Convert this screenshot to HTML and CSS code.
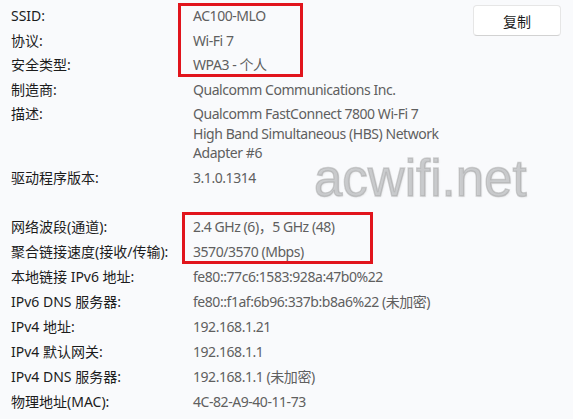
FILE: index.html
```html
<!DOCTYPE html>
<html lang="zh-CN">
<head>
    <meta charset="UTF-8">
    <title>网络属性</title>
    <link rel="stylesheet" href="styles.css">
</head>
<body>

    <div class="panel">
        <div class="details">
            <div class="group">
                <div class="label">SSID:</div>
                <div class="value">AC100-MLO</div>

                <div class="label">协议:</div>
                <div class="value">Wi-Fi 7</div>

                <div class="label">安全类型:</div>
                <div class="value">WPA3 - 个人</div>

                <div class="label">制造商:</div>
                <div class="value">Qualcomm Communications Inc.</div>

                <div class="label">描述:</div>
                <div class="value">Qualcomm FastConnect 7800 Wi-Fi 7<br>High Band Simultaneous (HBS) Network<br>Adapter #6</div>

                <div class="label">驱动程序版本:</div>
                <div class="value">3.1.0.1314</div>
            </div>

            <div class="group group-net">
                <div class="label">网络波段(通道):</div>
                <div class="value">2.4 GHz (6)，5 GHz (48)</div>

                <div class="label">聚合链接速度(接收/传输):</div>
                <div class="value">3570/3570 (Mbps)</div>

                <div class="label">本地链接 IPv6 地址:</div>
                <div class="value">fe80::77c6:1583:928a:47b0%22</div>

                <div class="label">IPv6 DNS 服务器:</div>
                <div class="value">fe80::f1af:6b96:337b:b8a6%22 (未加密)</div>

                <div class="label">IPv4 地址:</div>
                <div class="value">192.168.1.21</div>

                <div class="label">IPv4 默认网关:</div>
                <div class="value">192.168.1.1</div>

                <div class="label">IPv4 DNS 服务器:</div>
                <div class="value">192.168.1.1 (未加密)</div>

                <div class="label">物理地址(MAC):</div>
                <div class="value">4C-82-A9-40-11-73</div>
            </div>
        </div>

        <button class="copy-btn">复制</button>

        <!-- annotations drawn over the screenshot -->
        <div class="mark mark-top"></div>
        <div class="mark mark-band"></div>
        <div class="watermark">acwifi.net</div>
    </div>

</body>
</html>
```

FILE: styles.css
```css
/* General */
body {
    margin: 0;
    background-color: #f9fafc;
    font-family: "Noto Sans", "Noto Sans CJK SC", sans-serif;
    font-size: 14px;
}

.panel {
    position: relative;
    display: flex;
    justify-content: space-between;
    align-items: flex-start;
    height: 419px;
    padding: 6px 12px 0 11px;
    box-sizing: border-box;
    overflow: hidden;
}

/* Property list */
.details {
    display: flex;
    flex-direction: column;
}

.group {
    display: grid;
    grid-template-columns: 182px auto;
    row-gap: 5px;
    line-height: 19.5px;
}

.group-net {
    margin-top: 30px;
    row-gap: 5.5px;
}

.label {
    color: #1c1c1c;
    white-space: nowrap;
}

.value {
    color: #5f5f5f;
    letter-spacing: -0.45px;
    white-space: nowrap;
}

/* Copy button */
.copy-btn {
    width: 88px;
    height: 31px;
    margin-top: -1px;
    border: 1px solid #e6e6e6;
    border-bottom-color: #d2d2d2;
    border-radius: 4px;
    background-color: #ffffff;
    color: #1c1c1c;
    font-family: "Noto Sans CJK SC", sans-serif;
    font-size: 14px;
    cursor: pointer;
}

/* Red highlight boxes */
.mark {
    position: absolute;
    border: 3px solid #e1141c;
}

.mark-top {
    left: 178px;
    top: 3px;
    width: 119px;
    height: 68px;
}

.mark-band {
    left: 182px;
    top: 212px;
    width: 185px;
    height: 46px;
}

/* Watermark */
.watermark {
    position: absolute;
    left: 314px;
    top: 149px;
    font-family: "Liberation Sans", sans-serif;
    font-size: 51px;
    line-height: 60px;
    color: rgba(170, 172, 174, 0.5);
    -webkit-text-stroke: 1.4px rgba(150, 150, 150, 0.4);
    text-shadow: 1px 1px 2px rgba(0, 0, 0, 0.08);
}
```
